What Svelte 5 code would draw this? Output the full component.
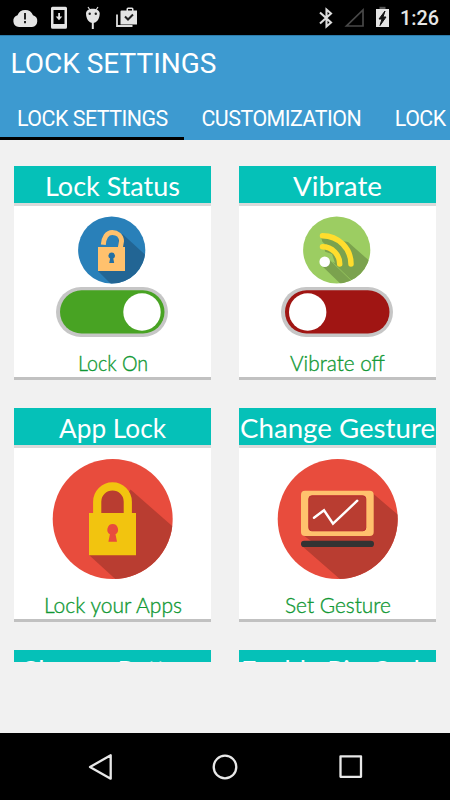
<script>

    let tabs = ['LOCK SETTINGS', 'CUSTOMIZATION', 'LOCK'];
    let active = 0;

    // x / w: start and drawn length of each label inside a 197px card
    let cards = [
        { icon: 'unlock', title: 'Lock Status', x: 31, w: 135, label: 'Lock On', lx: 64, lw: 70, on: true },
        { icon: 'vibrate', title: 'Vibrate', x: 54, w: 89, label: 'Vibrate off', lx: 51, lw: 95, on: false },
        { icon: 'lock', title: 'App Lock', x: 45, w: 107, label: 'Lock your Apps', lx: 30, lw: 138 },
        { icon: 'gesture', title: 'Change Gesture', x: 1, w: 195, label: 'Set Gesture', lx: 46, lw: 106 },
        { icon: 'pattern', title: 'Change Pattern', x: 6, w: 185 },
        { icon: 'pin', title: 'Enable Pin Code', x: 2, w: 193 }
    ];

    const toggle = (card) => {
        if (card.on === undefined) return;
        card.on = !card.on;
        cards = cards;
    }

</script>

<div class="screen">
    <div class="status">
        <svg width="450" height="35" viewBox="0 0 450 35">
            <g fill="#e4e4e4">
                <path d="M19 27a6 6 0 0 1-1.500-11.700A8.300 8.300 0 0 1 33 15.300A6 6 0 0 1 32 27z" />
                <path d="M52.500 6.700h13a1.500 1.500 0 0 1 1.500 1.500v19a1.500 1.500 0 0 1-1.500 1.500h-13a1.500 1.500 0 0 1-1.500-1.500v-19a1.500 1.500 0 0 1 1.500-1.500zM53.500 10v14h11V10z" fill-rule="evenodd" />
                <path d="M58.200 13h1.800v3.500h2.300L59 20.300l-3.300-3.800h2.500z" />
                <path d="M86 13.500c0-3 3-4.800 6.700-4.800s7 1.800 7 4.800c0 5-2.800 9.500-6.900 9.500S86 18.500 86 13.500z" />
                <path d="M91.800 22h2v7h-2z" />
                <path d="M121.500 10.500h5V9a1.500 1.500 0 0 1 1.500-1.500h4A1.500 1.500 0 0 1 133.500 9v1.500H137v14h-16.500v-13a1 1 0 0 1 1-1zM128 9v1.500h4V9z" fill-rule="evenodd" />
                <path d="M376 9h13v18h-13z" />
            </g>
            <path d="M25 13v6.500M25 21v2.200" stroke="#222" stroke-width="2" />
            <path d="M88 7l2 3M98 7l-2 3" stroke="#ddd" stroke-width="1.200" />
            <circle cx="89.700" cy="13.800" r="1.200" fill="#222" />
            <circle cx="95.800" cy="13.800" r="1.200" fill="#222" />
            <path d="M125 16.500l3 3 5-5" fill="none" stroke="#222" stroke-width="2" />
            <path d="M117 14.500V26h15.500" fill="none" stroke="#ddd" stroke-width="1.800" />
            <path d="M320 12.500l11 10-4.500 4V9.500l4.500 4-11 10" fill="none" stroke="#ddd" stroke-width="2.100" />
            <path d="M346.500 26H363V10z" fill="none" stroke="#484848" stroke-width="1.700" />
            <path d="M379.500 6.800h6V9h-6z" fill="#555" />
            <path d="M385 11l-6 8h3l-2 6.500 6-8.500h-3z" fill="#111" stroke="#111" />
        </svg>
        <span class="time">1:26</span>
    </div>

    <header>
        <h1>LOCK SETTINGS</h1>
        <nav>
            {#each tabs as tab, i}
                <button class="tab {i == active ? 'active' : ''}" on:click={() => active = i}>{tab}</button>
            {/each}
        </nav>
    </header>

    <main>
        {#each cards as card}
            <button class="card" on:click={() => toggle(card)}>
                <svg class="title" width="197" height="37" viewBox="0 0 197 37">
                    <text x={card.x} y="30" textLength={card.w} lengthAdjust="spacingAndGlyphs">{card.title}</text>
                </svg>
                <svg class="body" width="197" height="171" viewBox="0 0 197 171">
                    {#if card.icon == 'unlock'}
                        <clipPath id="c-unlock"><circle cx="97.700" cy="44" r="33.600" /></clipPath>
                        <circle cx="97.700" cy="44" r="33.600" fill="#2980b9" />
                        <path d="M108.500 28L137 54V84H103L84 65V41h12l8-8z" fill="#226594" clip-path="url(#c-unlock)" />
                        <path d="M92 37c1.500-5 3-7 6-7s6.500 2 6.500 6v6H92z" fill="#2980b9" />
                        <path d="M89.300 38.700c.6-7 3.600-12.200 9-12.200 5 0 9 3.200 9.200 8.500l-1.200 7" fill="none" stroke="#ffc16d" stroke-width="5" />
                        <path d="M84 41h27v24H84z" fill="#ffc16d" />
                        <path d="M97.700 46.500a3.200 3.200 0 0 1 1.600 6l.9 4.500h-5l.9-4.500a3.200 3.200 0 0 1 1.600-6z" fill="#226fa3" />
                    {:else if card.icon == 'vibrate'}
                        <clipPath id="c-vibrate"><circle cx="97.700" cy="44" r="33.600" /></clipPath>
                        <circle cx="97.700" cy="44" r="33.600" fill="#9ccd62" />
                        <g clip-path="url(#c-vibrate)">
                            <path d="M82 31l27 5 26 23v25h-27L82 59l6-7z" fill="#7ba24e" />
                            <path d="M81 44v14l3-6 12 5-3-9z" fill="#9ccd62" />
                            <path d="M81 34v6l5-2z" fill="#9ccd62" />
                            <path d="M90 53l25 24" stroke="#93c25c" stroke-width="1" />
                        </g>
                        <path d="M83.500 40.700c9.500 0 17.200 8 17.200 17.300M83.500 29.700c16 0 28.500 12.800 28.500 28.300" fill="none" stroke="#ffdd2d" stroke-width="5.500" stroke-linecap="round" />
                        <circle cx="85.700" cy="55.800" r="5.300" fill="#fff" />
                    {:else if card.icon == 'lock'}
                        <clipPath id="c-lock"><circle cx="98.700" cy="71" r="60" /></clipPath>
                        <circle cx="98.700" cy="71" r="60" fill="#e84c3d" />
                        <path d="M116.500 41.500L165 84v55h-55L75 107z" fill="#b93d31" clip-path="url(#c-lock)" />
                        <path d="M83.200 66V53.700a15.300 15.300 0 0 1 30.600 0V66" fill="#b93d31" stroke="#f2c40f" stroke-width="8.200" />
                        <path d="M75 65h47v42.300H75z" fill="#f2c40f" />
                        <path d="M98.700 76a5.600 5.600 0 0 1 2.800 10.300l1.500 7.500h-8.600l1.500-7.500A5.600 5.600 0 0 1 98.700 76z" fill="#e84c3d" />
                    {:else if card.icon == 'gesture'}
                        <clipPath id="c-gesture"><circle cx="98.700" cy="71" r="60" /></clipPath>
                        <circle cx="98.700" cy="71" r="60" fill="#e84c3d" />
                        <path d="M134 45.500L165 72v67h-55L63 98l9-5-8-6z" fill="#b93d31" clip-path="url(#c-gesture)" />
                        <rect x="62" y="42.700" width="72.700" height="45.300" rx="4" fill="#ffc16d" />
                        <rect x="69.800" y="47.800" width="57" height="35" rx="3" fill="#b93d31" stroke="#b8292e" />
                        <path d="M75 69.700l10-7.400 9 13.400 24.300-23" fill="none" stroke="#fff" stroke-width="2.400" stroke-linecap="round" />
                        <rect x="62" y="92.700" width="73" height="6.300" rx="3.100" fill="#333" />
                    {/if}
                    {#if card.on !== undefined}
                        <rect x="42" y="81" width="112" height="50" rx="25" fill="#c6c6c6" />
                        <rect x="46" y="84.300" width="104.500" height="43.200" rx="21.600" fill={card.on ? '#48a323' : '#a01513'} />
                        <circle cx={card.on ? 128 : 68.700} cy="106" r="18.700" fill="#fff" />
                    {/if}
                    {#if card.label}
                        <text x={card.lx} y="164.700" textLength={card.lw} lengthAdjust="spacingAndGlyphs">{card.label}</text>
                    {/if}
                </svg>
            </button>
        {/each}
    </main>

    <footer>
        <svg width="26" height="28" viewBox="0 0 26 28"><path d="M3 14L23.700 2.300v23.400z" /></svg>
        <svg width="26" height="28" viewBox="0 0 26 28"><circle cx="13" cy="14" r="11.300" /></svg>
        <svg width="26" height="28" viewBox="0 0 26 28"><rect x="2.500" y="3.300" width="20.500" height="20.500" /></svg>
    </footer>
</div>

<style>

    :global(body) {
        margin: 0;
        font-family: 'Roboto', sans-serif;
    }

    .screen {
        width: 450px;
        height: 800px;
        display: flex;
        flex-direction: column;
        overflow: hidden;
        background-color: #f1f1f1;
    }

    .status {
        display: grid;
        height: 35px;
        background-color: #000;
        flex-shrink: 0;
    }

    .status > * {
        grid-area: 1 / 1;
    }

    .time {
        justify-self: end;
        align-self: center;
        padding: 3px 11px 0 0;
        color: #e6e6e6;
        font-size: 19.8px;
        font-weight: 500;
        line-height: 24px;
    }

    header {
        height: 105px;
        flex-shrink: 0;
        display: flex;
        flex-direction: column;
        justify-content: space-between;
        background-color: #3d9ad0;
        color: #fff;
        box-shadow: inset 0 1px #2c7cab;
    }

    h1 {
        margin: 0;
        padding: 12px 0 0 10.5px;
        font-size: 28px;
        font-weight: 400;
        line-height: 33px;
    }

    nav {
        display: flex;
        height: 40px;
    }

    button {
        border: 0;
        padding: 0;
        font: inherit;
        color: inherit;
        cursor: pointer;
    }

    .tab {
        box-sizing: border-box;
        height: 40px;
        padding: 0 16.6px 0 17px;
        background: none;
        border-bottom: 3px solid transparent;
        font-size: 21.4px;
        letter-spacing: -0.5px;
        white-space: nowrap;
        flex-shrink: 0;
    }

    .tab.active {
        border-color: #000;
    }

    main {
        height: 496px;
        padding: 26px 14px 0;
        flex-shrink: 0;
        display: grid;
        grid-template-columns: 197px 197px;
        grid-auto-rows: 214px;
        gap: 28px;
        overflow: hidden;
    }

    .card {
        display: block;
        background-color: #fff;
        border-bottom: 3px solid #c1c1c1;
    }

    .card svg {
        display: block;
        font-family: 'Lato', sans-serif;
    }

    .title {
        background-color: #05c1b8;
        border-bottom: 3px solid #dadada;
        fill: #fff;
        font-size: 27.5px;
    }

    .body text {
        fill: #109834;
        stroke: #109834;
        stroke-width: 0.35;
        font-size: 21px;
        font-weight: 300;
    }

    footer {
        height: 67px;
        margin-top: auto;
        flex-shrink: 0;
        display: flex;
        align-items: center;
        justify-content: center;
        gap: 99.5px;
        background-color: #000;
    }

    footer svg {
        fill: none;
        stroke: #e8e8e8;
        stroke-width: 2.3;
        stroke-linejoin: round;
    }

</style>
